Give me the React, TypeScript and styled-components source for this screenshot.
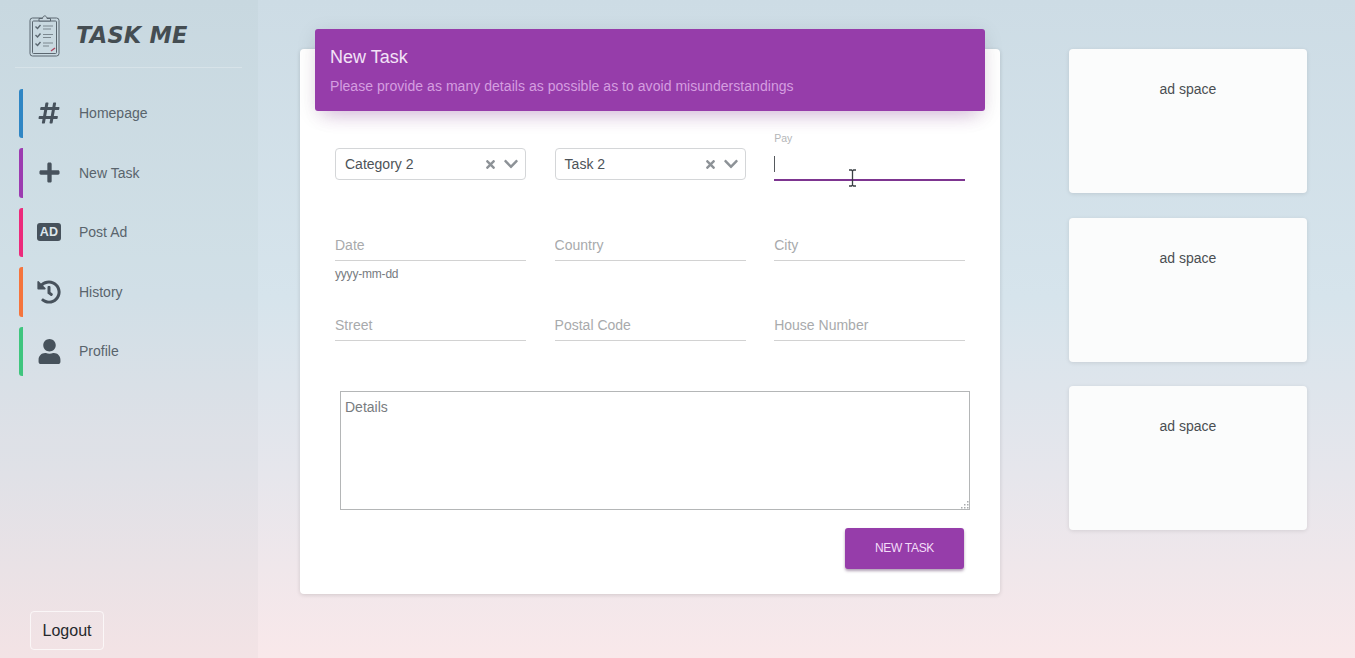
import React from "react";
import styled, { createGlobalStyle } from "styled-components";
import { FaChevronDown, FaHashtag, FaHistory, FaPlus, FaTimes, FaUser } from "react-icons/fa";

const GlobalStyle = createGlobalStyle`
  html, body {
    margin: 0;
    padding: 0;
    height: 100%;
  }
  body {
    font-family: "Liberation Sans", Arial, sans-serif;
    overflow: hidden;
  }
  * {
    box-sizing: border-box;
  }
`;

const AdBadge = styled.div`
  width: 24px;
  height: 18px;
  display: flex;
  align-items: center;
  justify-content: center;
  font-size: 12.500px;
  font-weight: 700;
  letter-spacing: 0.3px;
  color: #dfe7ec;
  background: #47525c;
  border-radius: 3px;
`;

const navItems = [
  { label: "Homepage", color: "#2f86c4", icon: <FaHashtag size={24} /> },
  { label: "New Task", color: "#9c3bb0", icon: <FaPlus size={23} /> },
  { label: "Post Ad", color: "#ec2a7b", icon: <AdBadge>AD</AdBadge> },
  { label: "History", color: "#f5743c", icon: <FaHistory size={24} /> },
  { label: "Profile", color: "#3fc57e", icon: <FaUser size={25} /> },
];

const ClipboardLogo = () => (
  <svg width="32" height="44" viewBox="0 0 32 44" fill="none" stroke="#5b6770" strokeWidth="1">
    <rect x="1" y="5" width="29" height="38" rx="2.5" />
    <rect x="3.5" y="8" width="24" height="32.5" rx="1" />
    <path d="M10 8V5.5h3.5C14 2 17.500 2 18 5.500h3.500V8Z" fill="#c9d7df" />
    <g strokeWidth="1.400">
      <path d="M6.500 13.500l2 2 3-3.500M6.500 22l2 2 3-3.500M6.500 30.500l2 2 3-3.500" />
    </g>
    <path d="M14 13h10M14 16h8M14 21.500h10M14 24.500h8M14 30h10M14 33h6" strokeWidth="1.200" stroke="#7c8890" />
    <path d="M22 38l4-3" stroke="#b0455f" strokeWidth="1.400" />
  </svg>
);

const IBeam = () => (
  <svg width="9" height="18" viewBox="0 0 9 18" fill="none" stroke="#3a3f44" strokeWidth="1.300">
    <path d="M1 1h2.500L4.500 2l1-1H8M4.500 2v14M1 17h2.500l1-1 1 1H8" />
  </svg>
);

const GripDots = () => (
  <svg width="9" height="9" viewBox="0 0 9 9" fill="#a9abad">
    <rect x="7" y="1" width="1.500" height="1.500" />
    <rect x="4" y="4" width="1.500" height="1.500" />
    <rect x="7" y="4" width="1.500" height="1.500" />
    <rect x="1" y="7" width="1.500" height="1.500" />
    <rect x="4" y="7" width="1.500" height="1.500" />
    <rect x="7" y="7" width="1.500" height="1.500" />
  </svg>
);

const App: React.FC = () => {
  return (
    <Page>
      <GlobalStyle />
      <Sidebar>
        <Brand>
          <ClipboardLogo />
          <BrandName>TASK ME</BrandName>
        </Brand>
        <NavList>
          {navItems.map((item) => (
            <NavItem key={item.label} $color={item.color}>
              <NavIcon>{item.icon}</NavIcon>
              <span>{item.label}</span>
            </NavItem>
          ))}
        </NavList>
        <LogoutButton>Logout</LogoutButton>
      </Sidebar>

      <Main>
        <Card>
          <CardHeader>
            <CardTitle>New Task</CardTitle>
            <CardSubtitle>Please provide as many details as possible as to avoid misunderstandings</CardSubtitle>
          </CardHeader>

          <FieldGrid>
            <SelectBox>
              <span>Category 2</span>
              <SelectIcons>
                <FaTimes size={13} />
                <FaChevronDown size={16} />
              </SelectIcons>
            </SelectBox>
            <SelectBox>
              <span>Task 2</span>
              <SelectIcons>
                <FaTimes size={13} />
                <FaChevronDown size={16} />
              </SelectIcons>
            </SelectBox>
            <ActiveField>
              <FloatLabel>Pay</FloatLabel>
              <Caret />
              <CursorMark>
                <IBeam />
              </CursorMark>
            </ActiveField>

            <Field>
              <TextInput placeholder="Date" readOnly />
              <HelpText>yyyy-mm-dd</HelpText>
            </Field>
            <Field>
              <TextInput placeholder="Country" readOnly />
            </Field>
            <Field>
              <TextInput placeholder="City" readOnly />
            </Field>

            <Field>
              <TextInput placeholder="Street" readOnly />
            </Field>
            <Field>
              <TextInput placeholder="Postal Code" readOnly />
            </Field>
            <Field>
              <TextInput placeholder="House Number" readOnly />
            </Field>
          </FieldGrid>

          <DetailsWrap>
            <Details placeholder="Details" readOnly />
            <Grip>
              <GripDots />
            </Grip>
          </DetailsWrap>

          <Actions>
            <SubmitButton>NEW TASK</SubmitButton>
          </Actions>
        </Card>
      </Main>

      <AdColumn>
        <AdCard>ad space</AdCard>
        <AdCard>ad space</AdCard>
        <AdCard>ad space</AdCard>
      </AdColumn>
    </Page>
  );
};

export default App;

const Page = styled.div`
  display: flex;
  height: 658px;
  overflow: hidden;
  background: linear-gradient(180deg, #cddce5 0%, #d6e4ec 45%, #e6e6ec 72%, #f9e8ea 100%);
`;

const Sidebar = styled.aside`
  flex: 0 0 258px;
  display: flex;
  flex-direction: column;
  padding: 0 16px 8px 15px;
  background: rgba(90, 100, 110, 0.035);
`;

const Brand = styled.div`
  height: 68px;
  display: flex;
  align-items: center;
  gap: 15px;
  padding: 2px 0 0 14px;
  border-bottom: 1px solid rgba(255, 255, 255, 0.25);
`;

const BrandName = styled.div`
  font-family: "DejaVu Sans", sans-serif;
  font-size: 22.500px;
  font-weight: 700;
  font-style: italic;
  letter-spacing: 0.2px;
  color: #444d52;
`;

const NavList = styled.nav`
  display: flex;
  flex-direction: column;
  gap: 10px;
  margin-top: 20.500px;
`;

const NavItem = styled.div<{ $color: string }>`
  height: 49.500px;
  display: flex;
  align-items: center;
  border-left: 4px solid ${(props) => props.$color};
  border-radius: 3px;
  margin-left: 4px;
  font-size: 14px;
  color: #59646c;
`;

const NavIcon = styled.div`
  width: 56px;
  padding-right: 4px;
  display: flex;
  justify-content: center;
  color: #47525c;
`;

const LogoutButton = styled.button`
  margin: auto 0 0 15px;
  width: 74px;
  height: 39px;
  padding: 0;
  font-family: inherit;
  font-size: 16px;
  color: #25292c;
  background: transparent;
  border: 1px solid rgba(255, 255, 255, 0.7);
  border-radius: 4px;
`;

const Main = styled.main`
  flex: 0 0 700px;
  margin: 49px 0 0 42px;
`;

const Card = styled.section`
  height: 545px;
  display: flex;
  flex-direction: column;
  padding: 0 15px;
  background: #fff;
  border-radius: 4px;
  box-shadow: 0 1px 4px rgba(0, 0, 0, 0.14);
`;

const CardHeader = styled.header`
  height: 82px;
  margin-top: -20px;
  padding: 18px 15px 0;
  background: #963daa;
  border-radius: 3px;
  box-shadow: 0 12px 20px -10px rgba(156, 39, 176, 0.28), 0 4px 20px 0 rgba(0, 0, 0, 0.1);
`;

const CardTitle = styled.div`
  font-size: 18px;
  line-height: 21px;
  color: #f3e3f7;
`;

const CardSubtitle = styled.div`
  margin-top: 10px;
  font-size: 14px;
  line-height: 16px;
  letter-spacing: 0.04px;
  color: #d59ee0;
`;

const FieldGrid = styled.div`
  display: grid;
  grid-template-columns: repeat(3, 191px);
  grid-template-rows: 32px 32px 32px;
  column-gap: 28.600px;
  row-gap: 48px;
  margin: 37px 0 0 20px;
`;

const SelectBox = styled.div`
  display: flex;
  align-items: center;
  justify-content: space-between;
  padding: 0 6px 0 9px;
  font-size: 14px;
  color: #4d5358;
  border: 1px solid #d4d6d8;
  border-radius: 4px;
`;

const SelectIcons = styled.div`
  display: flex;
  align-items: center;
  gap: 6px;
  color: #8d9297;
`;

const Field = styled.div`
  position: relative;
`;

const ActiveField = styled(Field)`
  border-bottom: 2px solid #7d3590;
  height: 33px;
`;

const FloatLabel = styled.div`
  position: absolute;
  left: 0;
  top: -16px;
  font-size: 10.500px;
  color: #b4b6b8;
`;

const Caret = styled.div`
  position: absolute;
  left: 0;
  top: 8px;
  width: 1px;
  height: 16px;
  background: #55595d;
`;

const CursorMark = styled.div`
  position: absolute;
  left: 74px;
  top: 21px;
  line-height: 0;
`;

const TextInput = styled.input`
  display: block;
  width: 100%;
  height: 33px;
  padding: 2px 0 0;
  font-family: inherit;
  font-size: 14px;
  background: transparent;
  border: 0;
  border-bottom: 1px solid #d2d2d2;
  outline: none;

  &::placeholder {
    color: #a8aaac;
    opacity: 1;
  }
`;

const HelpText = styled.div`
  position: absolute;
  left: 0;
  top: 39px;
  font-size: 12px;
  letter-spacing: -0.2px;
  color: #777b7f;
`;

const DetailsWrap = styled.div`
  position: relative;
  width: 630px;
  height: 119px;
  margin: 51px 0 0 25px;
`;

const Details = styled.textarea`
  display: block;
  width: 100%;
  height: 100%;
  padding: 7px 4px;
  font-family: inherit;
  font-size: 14px;
  background: #fff;
  border: 1px solid #b4b6b7;
  outline: none;
  resize: none;

  &::placeholder {
    color: #787c80;
    opacity: 1;
  }
`;

const Grip = styled.div`
  position: absolute;
  right: 1px;
  bottom: 1px;
  line-height: 0;
`;

const Actions = styled.div`
  display: flex;
  justify-content: flex-end;
  margin-top: 18px;
  padding-right: 21px;
`;

const SubmitButton = styled.button`
  width: 119px;
  height: 41px;
  padding: 0 0 1px;
  font-family: inherit;
  font-size: 12px;
  letter-spacing: -0.3px;
  color: #f3dcf8;
  background: #963daa;
  border: 0;
  border-radius: 3px;
  box-shadow: 0 2px 3px rgba(60, 20, 70, 0.4);
`;

const AdColumn = styled.aside`
  flex: 0 0 238px;
  display: flex;
  flex-direction: column;
  gap: 24.500px;
  margin: 49px 0 0 69px;
`;

const AdCard = styled.div`
  height: 144px;
  padding-top: 32px;
  text-align: center;
  font-size: 14px;
  color: #4a4e52;
  background: #fbfcfc;
  border-radius: 4px;
  box-shadow: 0 1px 4px rgba(0, 0, 0, 0.1);
`;
